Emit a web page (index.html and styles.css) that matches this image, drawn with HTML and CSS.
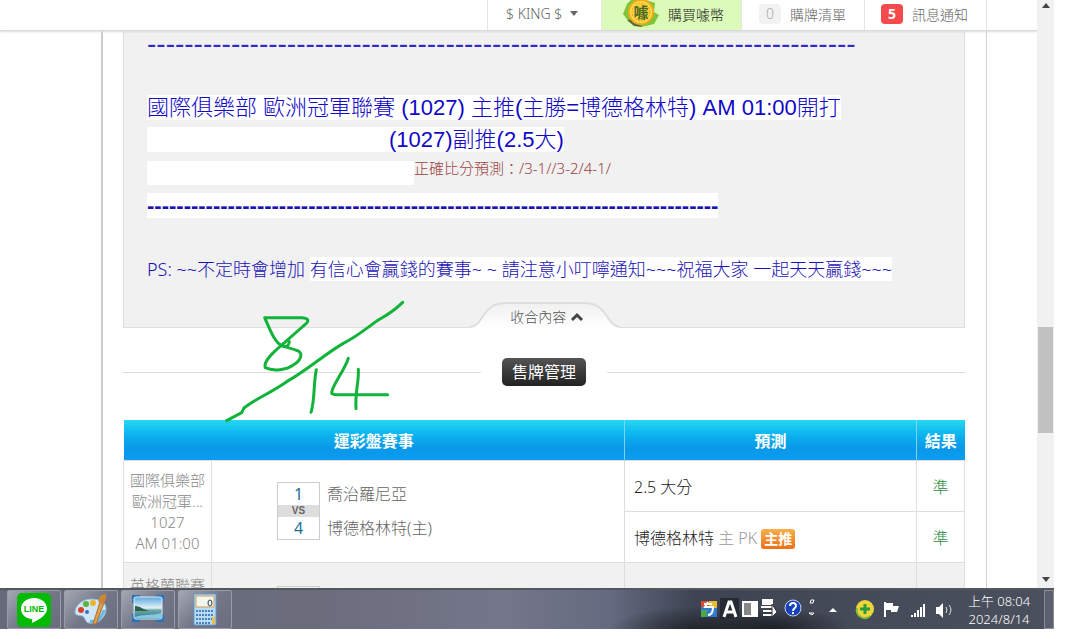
FILE: index.html
```html
<!DOCTYPE html>
<html lang="zh-Hant">
<head>
<meta charset="utf-8">
<title>售牌管理</title>
<link rel="stylesheet" href="styles.css">
</head>
<body>
<div class="desktop">
  <div class="browser">
    <div class="page">
      <nav class="topbar">
        <button class="nav-item user">$ KING $ <span class="caret"></span></button>
        <a class="nav-item buy" href="#">
          <svg class="coin" width="38" height="28" viewBox="0 0 38 28">
            <path d="M5 4 1 14l6 8 12 5 13-3 5-9-5-3 1-9-9-3H9z" fill="#7cc53a"/>
            <path d="M5 20l7 6 8 1-7-8z" fill="#566b38"/>
            <circle cx="19" cy="12" r="13" fill="#f5a91d"/>
            <circle cx="19" cy="12" r="11" fill="#fbe04f"/>
            <circle cx="19" cy="12" r="9" fill="#fbd22f" stroke="#f19a1e" stroke-dasharray="2 1"/>
            <text x="19" y="18" text-anchor="middle" class="coin-text">噱</text>
          </svg>購買噱幣</a>
        <a class="nav-item list" href="#"><span class="count">0</span>購牌清單</a>
        <a class="nav-item notice" href="#"><span class="count alert">5</span>訊息通知</a>
      </nav>
      <main class="sheet">
        <article class="post">
          <p class="rule-thin">----------------------------------------------------------------------------</p>
          <p class="pick first"><span class="mark">國際俱樂部 歐洲冠軍聯賽 (1027) 主推(主勝=博德格林特) AM 01:00開打</span></p>
          <p class="pick"><span class="mark indent-a">(1027)副推(2.5大)</span></p>
          <p class="score"><span class="mark blank"></span><span>正確比分預測：/3-1//3-2/4-1/</span></p>
          <p class="rule-bold"><span class="mark">------------------------------------------------------------------------------</span></p>
          <p class="note">PS: ~~不定時會增加 <span class="mark">有信心會贏錢的賽事~ ~ 請注意小叮嚀通知~~~祝福大家 一起天天贏錢~~~</span></p>
          <button class="fold">
            <svg class="fold-shape" viewBox="0 0 150 26" width="150" height="26">
              <defs><linearGradient id="tab" x1="0" y1="0" x2="0" y2="1"><stop offset="0" stop-color="#f0f0f0"/><stop offset="1" stop-color="#fff"/></linearGradient></defs>
              <path d="M0 25C8 24 10 18 14 13C20 4 26 1 36 1H114C124 1 130 4 136 13C140 18 142 24 150 25V26H0Z" fill="url(#tab)"/>
              <path d="M0 25C8 24 10 18 14 13C20 4 26 1 36 1H114C124 1 130 4 136 13C140 18 142 24 150 25" fill="none" stroke="#dedede" stroke-width="2"/>
            </svg>
            <span class="fold-label">收合內容
              <svg width="14" height="10" viewBox="0 0 14 10"><path d="M2 8 7 3l5 5" fill="none" stroke="#444" stroke-width="3"/></svg></span>
          </button>
        </article>
        <h2 class="section"><span>售牌管理</span></h2>
        <table class="games">
          <colgroup><col class="c-league"><col><col class="c-pick"><col class="c-result"></colgroup>
          <thead><tr><th colspan="2">運彩盤賽事</th><th>預測</th><th>結果</th></tr></thead>
          <tbody>
            <tr>
              <td rowspan="2" class="league">國際俱樂部<br>歐洲冠軍...<br>1027<br>AM 01:00</td>
              <td rowspan="2"><div class="match">
                <div class="versus"><b>1</b><i>VS</i><b>4</b></div>
                <div class="teams"><span>喬治羅尼亞</span><span>博德格林特(主)</span></div>
              </div></td>
              <td class="pick-cell">2.5 大分</td><td class="result">準</td>
            </tr>
            <tr><td class="pick-cell">博德格林特 <span class="dim">主 PK</span> <span class="tag">主推</span></td><td class="result">準</td></tr>
            <tr class="alt"><td class="league">英格蘭聯賽</td><td><div class="match"><div class="versus"><b></b></div></div></td><td></td><td></td></tr>
          </tbody>
        </table>
      </main>
    </div>
    <div class="scrollbar">
      <svg width="10" height="5" viewBox="0 0 10 5"><path d="M1 5 5 0 9 5z" fill="#444"/></svg>
      <div class="track"><div class="thumb"></div></div>
      <svg width="10" height="5" viewBox="0 0 10 5"><path d="M1 0 5 5 9 0z" fill="#444"/></svg>
    </div>
  </div>

  <footer class="taskbar">
    <div class="apps">
      <button class="app" aria-label="LINE">
        <svg width="36" height="36" viewBox="0 0 36 36"><rect x="1" y="1" width="34" height="34" rx="5" fill="#0b0"/><path d="M18 6C10 6 5 11 5 17c0 5 4 9 10 10 2 0 1 2 1 4 4-2 15-7 15-14C31 11 26 6 18 6z" fill="#fff"/><text x="18" y="20" text-anchor="middle" class="line-text">LINE</text></svg>
      </button>
      <button class="app" aria-label="小畫家">
        <svg width="36" height="36" viewBox="0 0 36 36"><path d="M18 7C9 7 2 14 2 20c0 4 4 3 7 4 4 1 2 6 7 7 9 2 17-6 17-14C33 10 27 7 18 7z" fill="#cfe7f7" stroke="#8fb9d8"/><path d="M17 29c6 2 12-3 14-11" stroke="#6bb6e6" stroke-width="3" fill="none"/><circle cx="8" cy="18" r="3" fill="#d9412e"/><circle cx="13" cy="12" r="3" fill="#5bb53b"/><circle cx="20" cy="11" r="3" fill="#eeb12c"/><circle cx="14" cy="20" r="2" fill="#3d6fc4"/><path d="M20 32 27 10l4 1-8 21z" fill="#dda04d" stroke="#b06f28"/><path d="M26 11c-2-6 2-9 7-9 1 5-1 8-3 10z" fill="#c98539"/></svg>
      </button>
      <button class="app" aria-label="相片">
        <svg width="36" height="36" viewBox="0 0 36 36"><defs><linearGradient id="sky" x1="0" y1="0" x2="0" y2="1"><stop offset="0" stop-color="#5aa7df"/><stop offset=".5" stop-color="#e2f2f8"/><stop offset=".6" stop-color="#6da6a5"/><stop offset="1" stop-color="#2c7a9a"/></linearGradient></defs><path d="M2 3h8v4H6v4H2zM34 3h-8v4h4v4h4zM2 30h8v-4H6v-4H2zM34 30h-8v-4h4v-4h4z" fill="#2d73b9"/><rect x="4" y="5" width="28" height="22" rx="2" fill="url(#sky)" stroke="#dcebf5"/><path d="M5 14c6 0 8 4 15 5H5z" fill="#2f6248"/><path d="M5 25c9-3 15-1 26-4v5H5z" fill="#83c9e0"/></svg>
      </button>
      <button class="app" aria-label="小算盤">
        <svg width="36" height="36" viewBox="0 0 36 36"><rect x="7" y="2" width="22" height="31" rx="1" fill="#b8dcf3" stroke="#5e9bce"/><rect x="9" y="4" width="18" height="11" fill="#f3f6ee" stroke="#d79c59"/><ellipse cx="23" cy="11" rx="2" ry="3" fill="none" stroke="#345"/><path d="M9 19h18M9 23h18M9 27h18M9 31h14" stroke="#4782bb" stroke-width="2" stroke-dasharray="2 1"/><path d="M25 25h3v7h-3z" fill="#efbd4d"/></svg>
      </button>
    </div>
    <div class="tray">
      <svg width="140" height="30" viewBox="0 0 140 30">
        <rect x="2" y="6" width="16" height="16" fill="#3079ce"/><path d="M2 6h8v6H2z" fill="#e04a30"/><path d="M10 6h8v7h-8z" fill="#e9bc32"/><path d="M2 15h6v7H2z" fill="#49a649"/><path d="M9 7 6 12h8c0 4-1 8-5 8M5 9h8" fill="none" stroke="#fff" stroke-width="2"/>
        <rect x="21" y="3" width="19" height="21" fill="#252932"/><path d="M25 22 30 7h2l5 15M27 17h8" fill="none" stroke="#fff" stroke-width="3"/>
        <rect x="43" y="6" width="16" height="16" fill="#fff"/><rect x="45" y="8" width="7" height="12" fill="#888"/>
        <path d="M64 5h9v4h-9zM62 12h12M64 16h10M64 20h9" fill="#fff" stroke="#fff" stroke-width="2"/><path d="M73 9v13l5-5z" fill="#fff" stroke="#333"/>
        <circle cx="94" cy="13" r="8" fill="#1641b8" stroke="#c4d3f2"/><path d="M91 11c0-4 6-4 6 0 0 2-3 2-3 5M94 17v2" fill="none" stroke="#fff" stroke-width="2"/>
        <path d="M111 8h3l1-3h-3zM110 18h5l-2 2z" fill="none" stroke="#fff"/>
        <path d="M130 17l4-4 4 4z" fill="#fff"/>
      </svg>
      <svg width="100" height="30" viewBox="0 0 100 30">
        <circle cx="11" cy="14" r="9" fill="#ecd63a"/><path d="M3 13a8 8 0 0 0 13 8" fill="none" stroke="#84bd36" stroke-width="2"/><path d="M11 9v10M6 14h10" stroke="#2c9a3a" stroke-width="3"/>
        <path d="M31 7v15" stroke="#fff" stroke-width="2"/><path d="M32 8h7v3h6l-2 6h-6v-2h-5z" fill="#fff"/>
        <path d="M58 20v2M61 18v4M64 15v7M67 12v10M70 9v13" stroke="#fff" stroke-width="2"/>
        <path d="M82 12h3l4-4v15l-4-4h-3z" fill="#fff"/><path d="M92 12q2 3 0 6M95 10q4 5 0 10" fill="none" stroke="#ddd"/>
      </svg>
      <div class="clock"><span>上午 08:04</span><span>2024/8/14</span></div>
      <button class="peek" aria-label="顯示桌面"></button>
    </div>
  </footer>
  <svg class="ink" width="400" height="190" viewBox="0 0 1200 570">
    <path d="M320 542 365 518 372 504C400 480 450 460 500 425C570 385 610 345 670 310C720 285 750 255 780 237C810 220 830 205 848 187"/>
    <path d="M488 318C465 310 450 270 434 233H545C570 235 568 245 550 258L480 320C450 345 430 370 436 383C460 395 500 390 520 375C545 360 548 340 535 333C515 325 500 322 488 318Q505 325 508 305"/>
    <path d="M589 389C580 430 585 480 573 517"/>
    <path d="M685 355C670 400 635 435 635 460Q640 465 655 464H803"/>
    <path d="M715 388C717 430 705 450 708 506"/>
  </svg>
</div>
</body>
</html>
```
FILE: styles.css
```css
* { box-sizing: border-box; }
body, p, h2 { margin: 0; }
body {
  background: #fff;
  font-family: "Noto Sans", "Noto Sans CJK TC", sans-serif;
  font-weight: 300;
}
button { font: inherit; border: 0; background: none; padding: 0; }
a { color: inherit; text-decoration: none; }

.desktop {
  position: relative;
  display: flex;
  flex-direction: column;
  height: 100vh;
  padding: 0 26px 10px 0;
}
.browser { display: flex; flex: 1; min-height: 0; }
.page { flex: 1; min-width: 0; overflow: hidden; }

.topbar {
  display: flex;
  justify-content: flex-end;
  height: 31px;
  padding-right: 50px;
  border-bottom: 1px solid #d8d8d8;
  box-shadow: 0 1px 2px #ddd;
  position: relative;
  font-size: 14px;
  color: #777;
}
.nav-item {
  display: flex;
  align-items: center;
  gap: 9px;
  padding-bottom: 3px;
  border-left: 1px solid #e6e6e6;
  color: #666;
}
.user { width: 114px; padding-left: 18px; gap: 8px; }
.caret { border: 4px solid transparent; border-top: 5px solid #666; border-bottom: 0; }
.buy { width: 140px; padding-left: 20px; gap: 8px; background: #dcfaba; color: #222; }
.coin-text { font-size: 15px; font-weight: 700; fill: #4b6a2a; }
.list { width: 123px; padding-left: 17px; }
.notice { width: 123px; padding-left: 16px; border-right: 1px solid #e6e6e6; }
.count {
  width: 22px;
  line-height: 20px;
  border-radius: 4px;
  background: #f2f2f2;
  color: #aaa;
  text-align: center;
}
.alert { background: #f5494b; color: #fff; font-weight: 700; }

.sheet {
  margin: 0 50px 0 101px;
  padding: 0 21px 0 20px;
  border-left: 2px solid #ccc;
  border-right: 1px solid #d4d4d4;
}
.post {
  display: flex;
  flex-direction: column;
  height: 297px;
  padding-left: 23px;
  border: 1px solid #dedede;
  border-top: 0;
  background: #f1f1f1;
  color: #1a12b4;
  white-space: nowrap;
}
.mark { background: #fff; }
.rule-thin { font: 28px/26px "Liberation Sans", sans-serif; color: #2f2bc4; }
.pick { font: 300 22px/32px "Liberation Sans", "Noto Sans CJK TC", sans-serif; color: #1208c8; }
.first { margin-top: 35px; }
.indent-a { padding-left: 242px; }
.score { display: flex; height: 34px; font-size: 15px; line-height: 24px; color: #9b4343; }
.blank { width: 267px; height: 24px; margin-top: 5px; }
.rule-bold { font: 700 22px/32px "Liberation Sans", sans-serif; }
.note { margin-top: 33px; font-size: 18px; line-height: 28px; }
.fold { position: relative; width: 150px; height: 26px; margin: auto 0 -1px 323px; color: #555; }
.fold-shape { display: block; }
.fold-label { position: absolute; inset: 0; padding-left: 4px; font-size: 14px; line-height: 30px; }

.section {
  display: flex;
  align-items: center;
  gap: 21px;
  height: 92px;
  padding-bottom: 4px;
  font-size: 16px;
  font-weight: 400;
}
.section::before, .section::after { content: ""; flex: 1; height: 1px; background: #ddd; }
.section span {
  padding: 0 10px;
  border-radius: 5px;
  background: linear-gradient(#555, #222);
  color: #fff;
  line-height: 28px;
}

.games { width: 100%; table-layout: fixed; border-collapse: collapse; font-size: 16px; color: #666; }
.c-league { width: 88px; }
.c-pick { width: 292px; }
.c-result { width: 48px; }
.games th {
  height: 40px;
  padding: 0;
  background: linear-gradient(#25d8f2, #0bb0ee 40%, #0a98e8 70%, #0c9cee);
  border-left: 1px solid #7cd4f8;
  color: #fff;
  font-weight: 700;
}
.games th:first-child { border-left: 0; }
.games td { height: 51px; padding: 0; border: 1px solid #dedede; }
.games .league { padding-top: 2px; font-size: 15px; line-height: 21px; text-align: center; color: #888; }
.games .pick-cell { padding-left: 9px; color: #222; }
.dim { color: #999; }
.tag {
  display: inline-block;
  padding: 0 3px;
  border-radius: 3px;
  background: linear-gradient(#f9b04a, #ee6f18);
  color: #fff;
  font-size: 14px;
  font-weight: 700;
  line-height: 20px;
}
.games .result { text-align: center; color: #2c8a40; }
.match { display: flex; gap: 7px; padding-left: 65px; }
.versus { width: 43px; border: 1px solid #ccc; text-align: center; }
.versus b, .versus i { display: block; font-style: normal; }
.versus b { min-height: 22px; font-weight: 400; line-height: 22px; color: #20718f; }
.versus i { font: 700 10px/12px "Liberation Sans", sans-serif; background: #ddd; }
.teams { display: flex; flex-direction: column; line-height: 24px; gap: 10px; }
.alt { background: #f1f1f1; }
.games .alt td { height: 88px; vertical-align: top; padding-top: 12px; }
.games .alt .match { margin-top: 11px; }

.scrollbar {
  display: flex;
  flex-direction: column;
  align-items: center;
  width: 17px;
  padding: 3px 0 6px;
  background: #f1f1f1;
}
.track { flex: 1; width: 15px; padding-top: 319px; }
.thumb { height: 106px; background: #c1c1c1; }

.taskbar {
  display: flex;
  justify-content: space-between;
  height: 41px;
  border-top: 2px solid #55565e;
  background:
    radial-gradient(ellipse 90px 24px at 700px 40px, #22242b, #22242b00),
    radial-gradient(ellipse 80px 20px at 770px 38px, #1d2027, #1d202700),
    linear-gradient(90deg, #666a7a, #6b6d7d 30%, #74768a 48%, #646a7f 58%, #3d4352 66%, #454a58 80%, #4b505f);
}
.apps { display: flex; gap: 3px; padding-left: 7px; }
.app {
  display: flex;
  align-items: center;
  justify-content: center;
  width: 54px;
  border: 1px solid #9a9da8;
  border-radius: 2px;
  background: linear-gradient(135deg, #a5a8b2, #737788 50%, #696d7e);
}
.line-text { font: 700 9px "Liberation Sans", sans-serif; fill: #0b0; }
.tray { display: flex; align-items: center; }
.tray svg { flex: none; }
.tray svg + svg { margin-left: 15px; }
.clock {
  display: flex;
  flex-direction: column;
  align-items: center;
  width: 90px;
  font-size: 13px;
  line-height: 18px;
  color: #fff;
}
.peek { align-self: stretch; width: 10px; border: 1px solid #8a8d98; background: #5c606e; }

.ink { position: absolute; left: 120px; top: 240px; pointer-events: none; }
.ink path { fill: none; stroke: #12b33a; stroke-width: 9; stroke-linecap: round; stroke-linejoin: round; }
```
